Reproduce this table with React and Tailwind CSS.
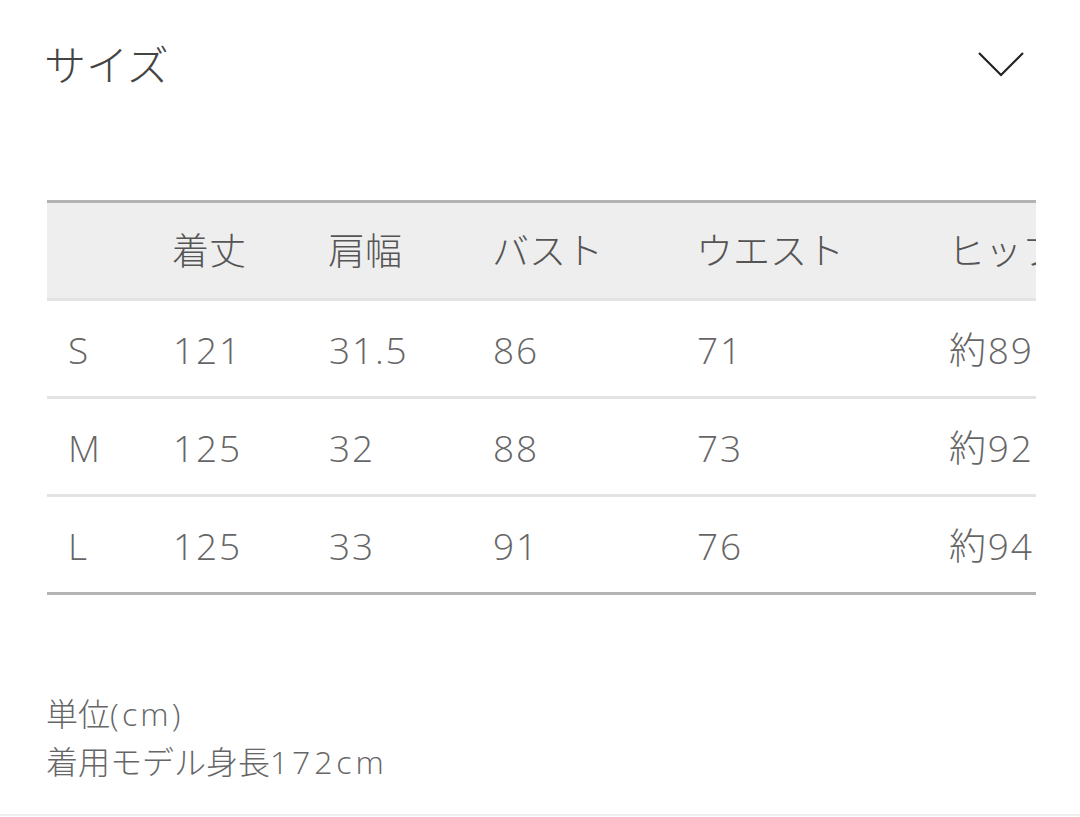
// App.jsx
const font = { fontFamily: '"Open Sans", "Noto Sans CJK JP", sans-serif' };

const columns = ['', '着丈', '肩幅', 'バスト', 'ウエスト', 'ヒップ'];
const widths = ['w-[105px]', 'w-[156px]', 'w-[164px]', 'w-[204px]', 'w-[252px]', 'w-[200px]'];

const rows = [
  ['S', '121', '31.5', '86', '71', '約89'],
  ['M', '125', '32', '88', '73', '約92'],
  ['L', '125', '33', '91', '76', '約94'],
];

const Chevron = () => (
  <svg width="48" height="28" viewBox="0 0 48 28" fill="none">
    <polyline points="2,3 24,25 46,3" stroke="#222" strokeWidth="2.2" />
  </svg>
);

export default function App() {
  return (
    <div className="w-[1080px] h-[817px] bg-white overflow-hidden" style={font}>
      {/* accordion header */}
      <div className="h-[128px] flex items-center justify-between pl-[44px] pr-[55px]">
        <span className="text-[42px] font-light text-[#444]">サイズ</span>
        <Chevron />
      </div>

      {/* size table, scrolls sideways */}
      <div className="mt-[72px] mx-[47px] w-[989px] overflow-hidden">
        <div className="w-[1100px]">
          <div className="flex items-center h-[101px] pl-[20px] bg-[#eeeeee] border-t-[3px] border-b-[3px] border-t-[#b3b3b3] border-b-[#e3e3e3] text-[37px] text-[#555] font-light">
            {columns.map((c, i) => (
              <div key={i} className={widths[i] + ' shrink-0 whitespace-nowrap'}>{c}</div>
            ))}
          </div>
          {rows.map((r, ri) => (
            <div
              key={ri}
              className={
                'flex items-center h-[98px] pl-[21px] pt-[3px] border-b-[3px] text-[37px] tracking-[0.05em] text-[#666] font-light ' +
                (ri === rows.length - 1 ? 'border-b-[#b3b3b3]' : 'border-b-[#e3e3e3]')
              }
            >
              {r.map((v, i) => (
                <div key={i} className={widths[i] + ' shrink-0 whitespace-nowrap'}>{v}</div>
              ))}
            </div>
          ))}
        </div>
      </div>

      {/* notes */}
      <div className="mt-[95px] pl-[46px] pb-[28px] border-b-2 border-[#eeeeee] text-[32px] leading-[48px] text-[#666] font-light">
        <p>
          単位<span className="tracking-[0.1em]">(cm)</span>
        </p>
        <p>
          着用モデル身長<span className="tracking-[0.12em]">172cm</span>
        </p>
      </div>
    </div>
  );
}
